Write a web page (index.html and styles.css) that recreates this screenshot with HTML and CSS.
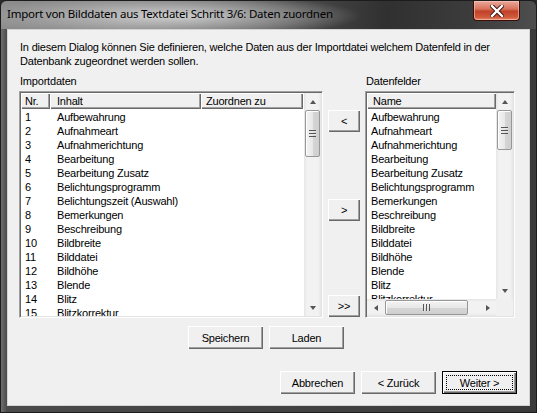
FILE: index.html
```html
<!DOCTYPE html>
<html lang="de">
<head>
<meta charset="utf-8">
<title>Import von Bilddaten</title>
<link rel="stylesheet" href="styles.css">
</head>
<body>
<div class="window">
  <div class="titlebar">
    <span class="title">Import von Bilddaten aus Textdatei Schritt 3/6: Daten zuordnen</span>
    <div class="close-btn">
      <svg width="14" height="12" viewBox="0 0 14 12"><path d="M2 1 L12 11 M12 1 L2 11" stroke="#3a1010" stroke-width="4.2" stroke-linecap="square"/><path d="M2 1 L12 11 M12 1 L2 11" stroke="#fff" stroke-width="2.4" stroke-linecap="square"/></svg>
    </div>
  </div>
  <div class="client">
    <p class="intro">In diesem Dialog können Sie definieren, welche Daten aus der Importdatei welchem Datenfeld in der<br>Datenbank zugeordnet werden sollen.</p>
    <div class="main">
      <div class="col col-left">
        <div class="label">Importdaten</div>
        <div class="listview">
          <div class="lv-area">
            <div class="lv-content">
              <div class="lv-header">
                <div class="hcell h-nr">Nr.</div>
                <div class="hcell h-inhalt">Inhalt</div>
                <div class="hcell h-zu">Zuordnen zu</div>
                <div class="hcell h-fill"></div>
              </div>
              <div class="lv-rows">
                <div class="row"><span class="c-nr">1</span><span class="c-name">Aufbewahrung</span></div>
                <div class="row"><span class="c-nr">2</span><span class="c-name">Aufnahmeart</span></div>
                <div class="row"><span class="c-nr">3</span><span class="c-name">Aufnahmerichtung</span></div>
                <div class="row"><span class="c-nr">4</span><span class="c-name">Bearbeitung</span></div>
                <div class="row"><span class="c-nr">5</span><span class="c-name">Bearbeitung Zusatz</span></div>
                <div class="row"><span class="c-nr">6</span><span class="c-name">Belichtungsprogramm</span></div>
                <div class="row"><span class="c-nr">7</span><span class="c-name">Belichtungszeit (Auswahl)</span></div>
                <div class="row"><span class="c-nr">8</span><span class="c-name">Bemerkungen</span></div>
                <div class="row"><span class="c-nr">9</span><span class="c-name">Beschreibung</span></div>
                <div class="row"><span class="c-nr">10</span><span class="c-name">Bildbreite</span></div>
                <div class="row"><span class="c-nr">11</span><span class="c-name">Bilddatei</span></div>
                <div class="row"><span class="c-nr">12</span><span class="c-name">Bildhöhe</span></div>
                <div class="row"><span class="c-nr">13</span><span class="c-name">Blende</span></div>
                <div class="row"><span class="c-nr">14</span><span class="c-name">Blitz</span></div>
                <div class="row"><span class="c-nr">15</span><span class="c-name">Blitzkorrektur</span></div>
              </div>
            </div>
            <div class="vscroll">
              <div class="sb-btn"><span class="arr arr-up"></span></div>
              <div class="sb-track-v">
                <div class="thumb-v thumb-left"><span class="grip-v"></span></div>
              </div>
              <div class="sb-btn"><span class="arr arr-down"></span></div>
            </div>
          </div>
        </div>
      </div>

      <div class="mid">
        <button class="btn mid-btn mid-1">&lt;</button>
        <button class="btn mid-btn mid-2">&gt;</button>
        <button class="btn mid-btn mid-3">&gt;&gt;</button>
      </div>

      <div class="col col-right">
        <div class="label">Datenfelder</div>
        <div class="listview">
          <div class="lv-grid">
            <div class="lv-content">
              <div class="lv-header">
                <div class="hcell h-name">Name</div>
              </div>
              <div class="lv-rows">
                <div class="row"><span class="c-single">Aufbewahrung</span></div>
                <div class="row"><span class="c-single">Aufnahmeart</span></div>
                <div class="row"><span class="c-single">Aufnahmerichtung</span></div>
                <div class="row"><span class="c-single">Bearbeitung</span></div>
                <div class="row"><span class="c-single">Bearbeitung Zusatz</span></div>
                <div class="row"><span class="c-single">Belichtungsprogramm</span></div>
                <div class="row"><span class="c-single">Bemerkungen</span></div>
                <div class="row"><span class="c-single">Beschreibung</span></div>
                <div class="row"><span class="c-single">Bildbreite</span></div>
                <div class="row"><span class="c-single">Bilddatei</span></div>
                <div class="row"><span class="c-single">Bildhöhe</span></div>
                <div class="row"><span class="c-single">Blende</span></div>
                <div class="row"><span class="c-single">Blitz</span></div>
                <div class="row"><span class="c-single">Blitzkorrektur</span></div>
              </div>
            </div>
            <div class="vscroll">
              <div class="sb-btn"><span class="arr arr-up"></span></div>
              <div class="sb-track-v">
                <div class="thumb-v thumb-right"><span class="grip-v"></span></div>
              </div>
              <div class="sb-btn"><span class="arr arr-down"></span></div>
            </div>
            <div class="hscroll">
              <div class="sb-btn"><span class="arr arr-left"></span></div>
              <div class="sb-track-h">
                <div class="thumb-h"><span class="grip-h"></span></div>
              </div>
              <div class="sb-btn"><span class="arr arr-right"></span></div>
            </div>
            <div class="sb-corner"></div>
          </div>
        </div>
      </div>
    </div>

    <div class="save-row">
      <button class="btn">Speichern</button>
      <button class="btn">Laden</button>
    </div>

    <div class="nav-row">
      <button class="btn">Abbrechen</button>
      <button class="btn">&lt; Zurück</button>
      <button class="btn btn-default"><span class="focus">Weiter &gt;</span></button>
    </div>
  </div>
</div>
</body>
</html>
```

FILE: styles.css
```css
* { box-sizing: border-box; }

html, body {
  margin: 0;
  padding: 0;
}

body {
  width: 537px;
  height: 413px;
  overflow: hidden;
  background: #2b2b2b;
  font-family: "Liberation Sans", Arial, sans-serif;
  font-size: 11px;
  letter-spacing: -0.2px;
  color: #000;
}

.window {
  width: 537px;
  height: 413px;
  display: flex;
  flex-direction: column;
  padding: 0 6px 6px 6px;
  border: 1px solid #1c1c1c;
  border-radius: 6px 6px 0 0;
  background: linear-gradient(90deg, #6f6f6f 0px, #4a4a4a 6px, #3a3a3a 100%);
}

/* ---------- title bar ---------- */
.titlebar {
  height: 28px;
  margin: 0 -6px;
  padding: 0 7px 0 6px;
  display: flex;
  align-items: flex-start;
  justify-content: space-between;
  background:
    radial-gradient(ellipse 190px 22px at 170px 15px, rgba(225,225,225,0.85), rgba(200,200,200,0.35) 70%, rgba(160,160,160,0) 100%),
    linear-gradient(90deg, #8e8e8e 0%, #777 25%, #545454 50%, #303030 72%, #3c3c3c 88%, #4e4e4e 100%);
  border-radius: 6px 6px 0 0;
}

.title {
  font-family: "Noto Sans", "Open Sans", sans-serif;
  font-size: 11.5px;
  line-height: 16px;
  margin-top: 5px;
  color: #000;
  letter-spacing: -0.25px;
}

.close-btn {
  width: 47px;
  height: 20px;
  margin-right: 9px;
  display: flex;
  align-items: center;
  justify-content: center;
  border: 1px solid #3d0d08;
  border-top: none;
  border-radius: 0 0 4px 4px;
  background: linear-gradient(180deg, #e9a99b 0%, #d9765f 40%, #c2412a 55%, #cf5a3a 85%, #e2876a 100%);
  box-shadow: inset 0 0 0 1px rgba(255,210,200,0.55);
}

/* ---------- client ---------- */
.client {
  flex: 1;
  background: #f0f0f0;
  border: 1px solid #d4d4d4;
  padding: 10px 12px 11px 11px;
  display: flex;
  flex-direction: column;
}

.intro {
  margin: 0 0 0 1px;
  line-height: 14px;
  height: 28px;
  white-space: nowrap;
}

.main {
  margin-top: 7px;
  display: flex;
  height: 243px;
}

.col { display: flex; flex-direction: column; }
.col-left { width: 304px; }
.col-right { width: 150px; margin-left: 5px; }

.label {
  height: 13px;
  line-height: 13px;
  padding-left: 1px;
  margin-bottom: 3px;
}

.listview {
  height: 227px;
  background: #fff;
  border: 1px solid;
  border-color: #a0a0a0 #fff #fff #a0a0a0;
  box-shadow: inset 1px 1px 0 #696969, inset -1px -1px 0 #e3e3e3;
  padding: 1px;
  display: flex;
}

.lv-area {
  flex: 1;
  display: flex;
  overflow: hidden;
}

.lv-content {
  flex: 1;
  display: flex;
  flex-direction: column;
  overflow: hidden;
  min-width: 0;
}

.lv-header {
  height: 16px;
  display: flex;
  flex: none;
}

.hcell {
  height: 16px;
  line-height: 16px;
  background: #f0f0f0;
  box-shadow: inset 1px 1px 0 #fff, inset -1px -1px 0 #696969, inset -2px -2px 0 #a0a0a0;
  white-space: nowrap;
  overflow: hidden;
}

.h-nr { width: 29px; padding-left: 4px; }
.h-inhalt { width: 151px; padding-left: 7px; }
.h-zu { width: 102px; padding-left: 5px; }
.h-fill { flex: 1; }
.h-name { flex: 1; padding-left: 6px; }

.lv-rows {
  flex: 1;
  overflow: hidden;
  padding-top: 1px;
}

.row {
  height: 14px;
  line-height: 14px;
  display: flex;
  white-space: nowrap;
}

.c-nr { width: 29px; padding-left: 4px; }
.c-name { padding-left: 7px; }
.c-single { padding-left: 4px; }

.lv-grid {
  flex: 1;
  display: grid;
  grid-template-columns: 1fr 17px;
  grid-template-rows: 1fr 17px;
  overflow: hidden;
}

/* ---------- scrollbars ---------- */
.vscroll {
  width: 17px;
  display: flex;
  flex-direction: column;
  background: linear-gradient(90deg, #e6e6e6 0, #f2f2f2 3px, #f2f2f2 14px, #e6e6e6 17px);
}

.hscroll {
  height: 17px;
  display: flex;
  background: linear-gradient(180deg, #e6e6e6 0, #f2f2f2 3px, #f2f2f2 14px, #e6e6e6 17px);
}

.sb-corner { background: #f0f0f0; }

.sb-btn {
  width: 17px;
  height: 17px;
  flex: none;
  display: flex;
  align-items: center;
  justify-content: center;
}

.sb-track-v { flex: 1; padding: 0 1px; }
.sb-track-h { flex: 1; padding: 1px 0; display: flex; }

.arr { width: 0; height: 0; border-style: solid; }
.arr-up { border-width: 0 3.5px 4px 3.5px; border-color: transparent transparent #555 transparent; }
.arr-down { border-width: 4px 3.5px 0 3.5px; border-color: #555 transparent transparent transparent; }
.arr-left { border-width: 3.5px 4px 3.5px 0; border-color: transparent #555 transparent transparent; }
.arr-right { border-width: 3.5px 0 3.5px 4px; border-color: transparent transparent transparent #555; }

.thumb-v {
  width: 15px;
  border: 1px solid #979797;
  border-radius: 2px;
  background: linear-gradient(90deg, #f3f3f3 0%, #e8e8e8 50%, #d6d6d6 51%, #cfcfcf 100%);
  box-shadow: inset 1px 1px 0 #fff;
  display: flex;
  align-items: center;
  justify-content: center;
}
.thumb-left { height: 47px; }
.thumb-right { height: 40px; }

.grip-v {
  width: 7px;
  height: 7px;
  background: repeating-linear-gradient(180deg, #555 0 1px, #e8e8e8 1px 2px, transparent 2px 3px);
}

.thumb-h {
  width: 83px;
  height: 15px;
  margin-left: 1px;
  border: 1px solid #979797;
  border-radius: 2px;
  background: linear-gradient(180deg, #f3f3f3 0%, #e8e8e8 50%, #d6d6d6 51%, #cfcfcf 100%);
  box-shadow: inset 1px 1px 0 #fff;
  display: flex;
  align-items: center;
  justify-content: center;
}

.grip-h {
  width: 7px;
  height: 7px;
  background: repeating-linear-gradient(90deg, #555 0 1px, #e8e8e8 1px 2px, transparent 2px 3px);
}

/* ---------- buttons ---------- */
.btn {
  width: 75px;
  height: 23px;
  padding: 0;
  margin: 0;
  font-family: "Liberation Sans", Arial, sans-serif;
  font-size: 11px;
  letter-spacing: -0.2px;
  color: #000;
  background: #f0f0f0;
  border: none;
  box-shadow: inset 1px 1px 0 #fff, inset -1px -1px 0 #696969, inset -2px -2px 0 #a0a0a0;
}

.mid {
  width: 32px;
  margin-left: 5px;
  display: flex;
  flex-direction: column;
}

.mid-btn { width: 32px; height: 22px; }
.mid-1 { margin-top: 35px; }
.mid-2 { margin-top: 67px; }
.mid-3 { margin-top: 74px; }

.save-row {
  margin-top: 8px;
  padding-left: 169px;
  display: flex;
  gap: 6px;
}

.nav-row {
  margin-top: 22px;
  display: flex;
  justify-content: flex-end;
  gap: 6px;
}

.btn-default {
  border: 1px solid #000;
  display: flex;
  align-items: center;
  justify-content: center;
  padding: 3px;
}

.focus {
  display: flex;
  align-items: center;
  justify-content: center;
  width: 100%;
  height: 100%;
  border: 1px dotted #000;
}
```
